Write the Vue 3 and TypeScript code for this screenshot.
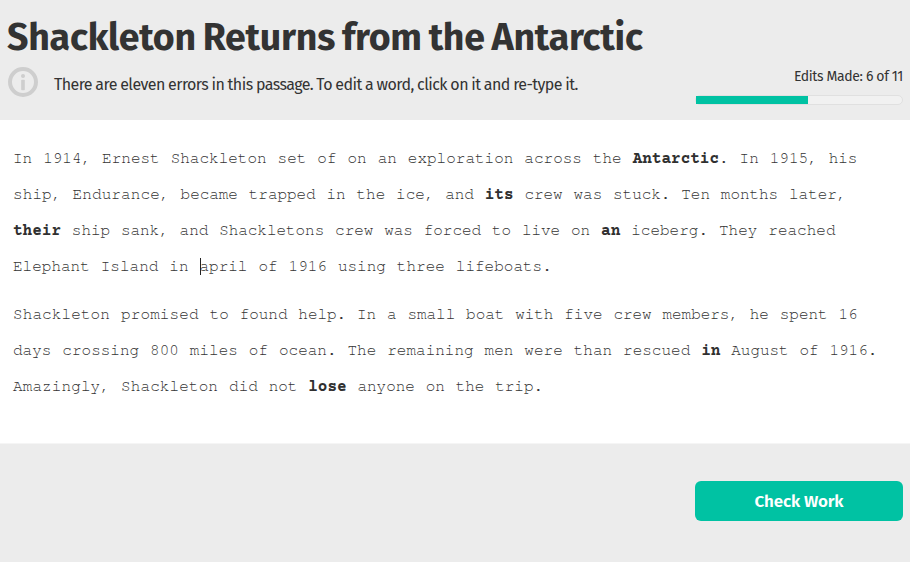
<script setup lang="ts">
interface Piece {
  text: string
  edited?: boolean
  caret?: boolean
  fit?: 'loose' | 'tight'
}

const title = 'Shackleton Returns from the Antarctic'
const editsMade = 6
const totalErrors = 11
const progress = `${(editsMade / totalErrors) * 100}%`

const lines: Piece[][][] = [
  [
    [
      { text: 'In 1914, Ernest Shackleton set of on an exploration across the ' },
      { text: 'Antarctic', edited: true },
      { text: '. In 1915, his' },
    ],
    [
      { text: 'ship, Endurance, ', fit: 'loose' },
      { text: 'became trapped in the ice, and ', fit: 'tight' },
      { text: 'its', edited: true },
      { text: ' crew was stuck. Ten months later,', fit: 'tight' },
    ],
    [
      { text: 'their', edited: true },
      { text: ' ship sank, and Shackletons crew was forced to live on ', fit: 'tight' },
      { text: 'an', edited: true },
      { text: ' iceberg. They reached' },
    ],
    [
      { text: 'Elephant Island in ' },
      { text: 'april', caret: true },
      { text: ' of 1916 using three lifeboats.' },
    ],
  ],
  [
    [
      { text: 'Shackleton promised ', fit: 'loose' },
      { text: 'to found help. In a small boat with five crew members, he spent 16', fit: 'tight' },
    ],
    [
      { text: 'days crossing 800 miles of ocean. The remaining men were than rescued ' },
      { text: 'in', edited: true },
      { text: ' August of 1916.', fit: 'tight' },
    ],
    [
      { text: 'Amazingly, Shackleton ', fit: 'loose' },
      { text: 'did not ', fit: 'tight' },
      { text: 'lose', edited: true },
      { text: ' anyone on the trip.', fit: 'tight' },
    ],
  ],
]
</script>

<template>
  <div class="page">
    <header class="header">
      <h1 class="title">{{ title }}</h1>
      <div class="subhead">
        <svg class="info" viewBox="0 0 30 30" aria-hidden="true">
          <circle cx="15" cy="15" r="13" fill="none" stroke="#cecece" stroke-width="4" />
          <circle cx="15" cy="9" r="2" fill="#cecece" />
          <rect x="13.2" y="12.8" width="3.6" height="10.4" rx="0.8" fill="#cecece" />
        </svg>
        <p class="directions">There are eleven errors in this passage. To edit a word, click on it and re-type it.</p>
        <div class="progress">
          <span class="count">Edits Made: {{ editsMade }} of {{ totalErrors }}</span>
          <div class="track"><div class="fill" :style="{ width: progress }"></div></div>
        </div>
      </div>
    </header>
    <main class="passage">
      <div v-for="(paragraph, p) in lines" :key="p" class="paragraph">
        <div v-for="(line, l) in paragraph" :key="l" class="line"><span
          v-for="(piece, i) in line" :key="i" :class="[piece.fit, { edited: piece.edited, caret: piece.caret }]">{{ piece.text }}</span></div>
      </div>
    </main>
    <footer class="footer">
      <button class="check" type="button">Check Work</button>
    </footer>
  </div>
</template>

<style>
body {
  margin: 0;
  background: #ececec;
}
</style>

<style scoped>
.page {
  display: flex;
  flex-direction: column;
  width: 910px;
  height: 562px;
  overflow: hidden;
  background: #ececec;
  color: #333;
  font-family: "Fira Sans", Roboto, "Open Sans", sans-serif;
}
.header {
  box-sizing: border-box;
  height: 120px;
  padding: 15px 7px 0;
}
.title {
  margin: 0;
  font-size: 37.5px;
  line-height: 46px;
  font-weight: 700;
  letter-spacing: -0.24px;
  word-spacing: -1.8px;
  white-space: nowrap;
}
.subhead {
  display: flex;
  align-items: flex-start;
  padding: 6px 0 0 1px;
}
.info {
  flex: none;
  width: 30px;
  height: 30px;
}
.directions {
  margin: 7px 0 0 16px;
  font-size: 16px;
  line-height: 22px;
  letter-spacing: -0.55px;
  word-spacing: -0.35px;
  white-space: nowrap;
}
.progress {
  width: 208px;
  margin-left: auto;
  display: flex;
  flex-direction: column;
  align-items: flex-end;
}
.count {
  font-size: 14px;
  line-height: 20px;
  letter-spacing: -0.37px;
}
.track {
  box-sizing: border-box;
  width: 208px;
  height: 10px;
  margin-top: 8px;
  border: 1px solid #e0e0e0;
  border-radius: 5px;
  background: #f1f1f1;
}
.fill {
  height: 8px;
  background: #00c2a3;
}
.passage {
  box-sizing: border-box;
  height: 324px;
  padding: 20px 13px 0;
  border-bottom: 1px solid #f5f5f5;
  background: #fff;
  color: #333;
  font-family: "TeX Gyre Cursor", "Courier Prime", "Liberation Mono", monospace;
  font-size: 16px;
  line-height: 36px;
  word-spacing: 1.35px;
}
.paragraph + .paragraph {
  margin-top: 12px;
}
.line {
  height: 36px;
  white-space: pre;
}
.edited {
  color: #303030;
  font-family: "Courier Prime", "Liberation Mono", monospace;
  font-weight: 700;
}
.loose {
  letter-spacing: 0.1px;
}
.tight {
  letter-spacing: -0.05px;
}
.caret {
  position: relative;
}
.caret::before {
  content: "";
  position: absolute;
  left: 0.5px;
  top: 2px;
  width: 1px;
  height: 17px;
  background: #222;
}
.footer {
  display: flex;
  justify-content: flex-end;
  padding: 37px 7px 0;
}
.check {
  width: 208px;
  height: 40px;
  padding: 2px 0 0;
  border: 0;
  border-radius: 6px;
  background: #00c2a3;
  color: #fff;
  font: 600 17px/38px "Fira Sans", Roboto, "Open Sans", sans-serif;
  letter-spacing: -0.15px;
}
</style>
